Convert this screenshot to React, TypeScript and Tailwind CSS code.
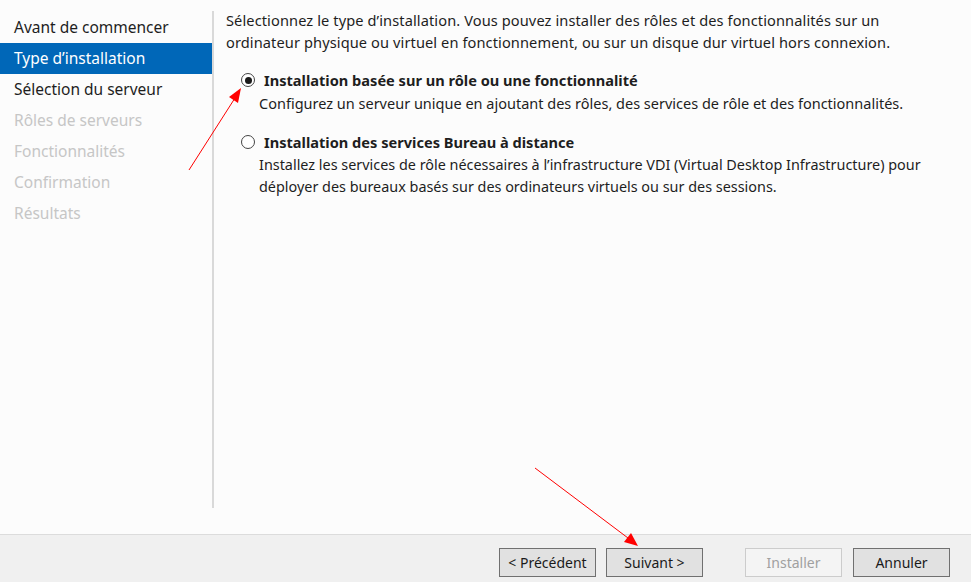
import React from "react";

const steps = [
  { label: "Avant de commencer", state: "done" },
  { label: "Type d\u2019installation", state: "active" },
  { label: "Sélection du serveur", state: "done" },
  { label: "Rôles de serveurs", state: "off" },
  { label: "Fonctionnalités", state: "off" },
  { label: "Confirmation", state: "off" },
  { label: "Résultats", state: "off" },
];

const Radio = ({ checked }: { checked?: boolean }) => (
  <span className="flex h-[14px] w-[14px] shrink-0 items-center justify-center rounded-full border border-[#444] bg-white">
    {checked && <span className="h-[7px] w-[7px] rounded-full bg-[#1a1a1a]" />}
  </span>
);

const Btn = ({ children, disabled }: { children: React.ReactNode; disabled?: boolean }) => (
  <button
    className={
      disabled
        ? "h-[29px] w-[97px] border border-[#cccccc] bg-[#f4f4f4] text-[14px] text-[#a0a0a0]"
        : "h-[29px] w-[97px] border border-[#707070] bg-[#e1e1e1] text-[14px] text-[#1a1a1a]"
    }
  >
    {children}
  </button>
);

export default function App() {
  return (
    <div
      className="relative flex h-[582px] w-[971px] flex-col bg-[#fcfcfc] text-[#1e1e1e]"
      style={{ fontFamily: '"Noto Sans", "Open Sans", sans-serif' }}
    >
      {/* contenu */}
      <div className="flex flex-1">
        <nav className="w-[212px] pt-[12px]">
          {steps.map((s) => (
            <div
              key={s.label}
              className={
                s.state === "active"
                  ? "flex h-[31px] items-center bg-[#0067b8] pl-[14px] pr-2 text-[15.5px] text-white"
                  : s.state === "done"
                  ? "flex h-[31px] items-center pl-[14px] text-[15.5px] text-[#1e1e1e]"
                  : "flex h-[31px] items-center pl-[14px] text-[15.5px] text-[#c6c6c6]"
              }
            >
              {s.label}
            </div>
          ))}
        </nav>

        <div className="mb-[26px] mt-[11px] w-[2px] bg-[#d9d9d9]" />

        <main className="flex-1 pl-[12px] text-[14.6px] leading-[22px]">
          <p className="pt-[9px] tracking-[0.1px]">
            Sélectionnez le type d’installation. Vous pouvez installer des rôles et des fonctionnalités sur un
            <br />
            ordinateur physique ou virtuel en fonctionnement, ou sur un disque dur virtuel hors connexion.
          </p>

          <div className="mt-[16px] flex items-center gap-[9px] pl-[15px]">
            <Radio checked />
            <span className="font-bold">Installation basée sur un rôle ou une fonctionnalité</span>
          </div>
          <p className="mt-[1px] pl-[33px] text-[14.5px]">
            Configurez un serveur unique en ajoutant des rôles, des services de rôle et des fonctionnalités.
          </p>

          <div className="mt-[17px] flex items-center gap-[9px] pl-[15px]">
            <Radio />
            <span className="font-bold">Installation des services Bureau à distance</span>
          </div>
          <p className="mt-[1px] pl-[33px] text-[14.4px]">
            Installez les services de rôle nécessaires à l’infrastructure VDI (Virtual Desktop Infrastructure) pour
            <br />
            déployer des bureaux basés sur des ordinateurs virtuels ou sur des sessions.
          </p>
        </main>
      </div>

      {/* pied */}
      <footer className="flex h-[48px] items-start justify-end border-t border-[#dcdcdc] bg-[#f0f0f0] pr-[21px] pt-[13px]">
        <div className="flex gap-[10px]">
          <Btn>&lt; Précédent</Btn>
          <Btn>Suivant &gt;</Btn>
        </div>
        <div className="ml-[42px] flex gap-[11px]">
          <Btn disabled>Installer</Btn>
          <Btn>Annuler</Btn>
        </div>
      </footer>

      {/* flèches d'annotation */}
      <svg className="pointer-events-none absolute left-0 top-0" width="971" height="582">
        <line x1="189" y1="170" x2="235" y2="98" stroke="#ff0000" strokeWidth="1" />
        <polygon points="241,88 229,97 238,103" fill="#ff0000" />
        <line x1="535" y1="468" x2="628" y2="538" stroke="#ff0000" strokeWidth="1" />
        <polygon points="638,546 624,542 631,533" fill="#ff0000" />
      </svg>
    </div>
  );
}
